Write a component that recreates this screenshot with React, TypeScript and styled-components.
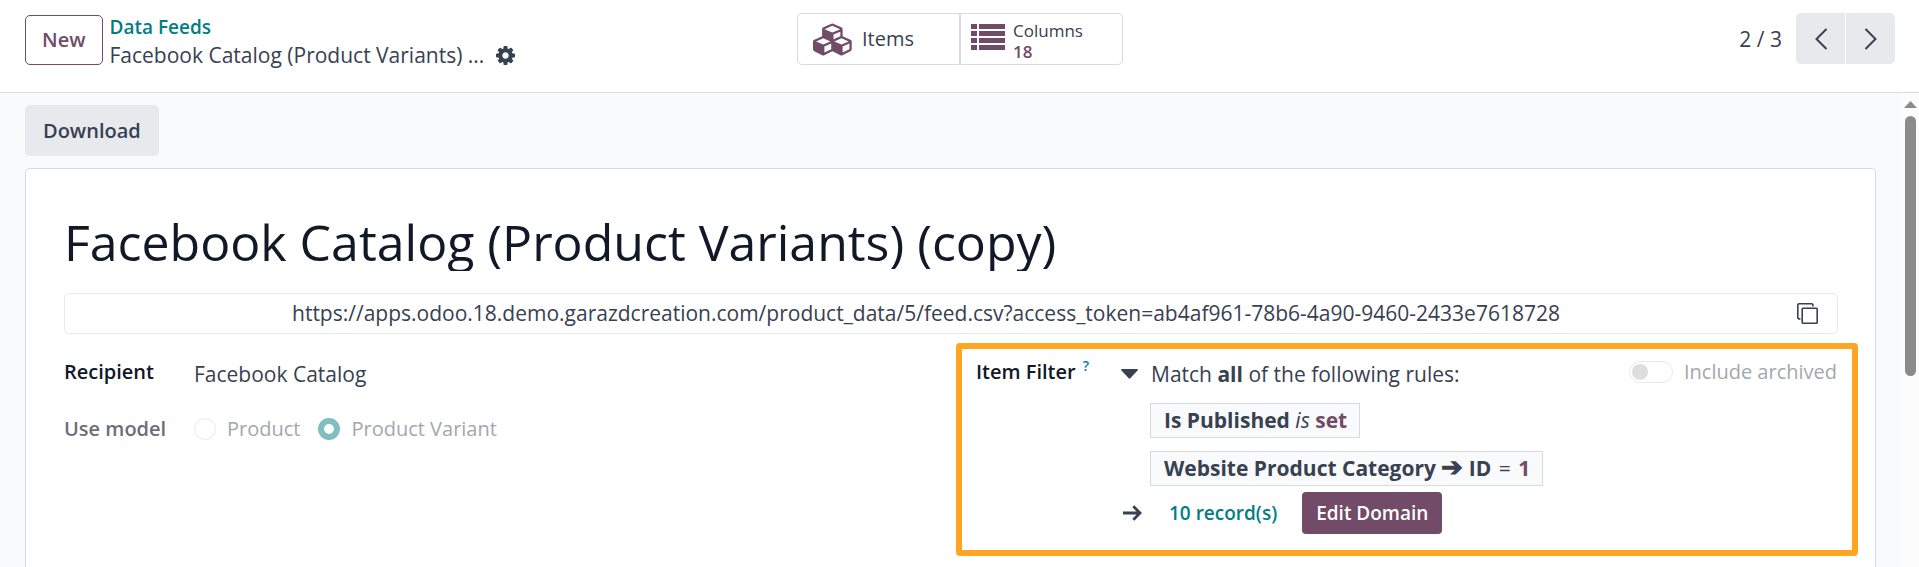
import React from 'react';
import styled, { createGlobalStyle } from 'styled-components';

const color = {
  text: '#374151',
  heading: '#111827',
  muted: '#a4a7ae',
  mutedLabel: '#6b6f79',
  brand: '#714b67',
  action: '#017e84',
  border: '#d8dadd',
  borderLight: '#e7e9ed',
  button: '#e7e9ed',
  view: '#f9fafb',
  highlight: '#ffa522',
};

const GlobalStyle = createGlobalStyle`
  *, *::before, *::after { box-sizing: border-box; }
  body {
    margin: 0;
    background: #fff;
    color: ${color.text};
    font: 400 21px/28px "Open Sans", "Noto Sans", sans-serif;
  }
  button, input { font: inherit; color: inherit; margin: 0; }
  button { padding: 0; border: 0; background: none; cursor: pointer; }
  svg { display: block; flex: none; }
`;

const Shell = styled.div`
  display: flex;
  flex-direction: column;
  min-height: 100vh;
`;

/* Control panel */

const ControlPanel = styled.header`
  display: grid;
  grid-template-columns: 1fr auto 1fr;
  align-items: start;
  min-height: 93px;
  padding: 13px 24px 0 25px;
  border-bottom: 1px solid ${color.border};
`;

const PanelStart = styled.div`
  display: flex;
  align-items: flex-start;
  gap: 7px;
`;

const NewButton = styled.button`
  height: 50px;
  margin-top: 2px;
  padding: 0 16px;
  border: 1px solid ${color.brand};
  border-radius: 5px;
  color: ${color.brand};
  font-size: 20px;
  font-weight: 600;
`;

const Breadcrumb = styled.nav`
  display: flex;
  flex-direction: column;
  white-space: nowrap;
`;

const BreadcrumbLink = styled.a`
  color: ${color.action};
  font-size: 19px;
  font-weight: 600;
  text-decoration: none;
`;

const BreadcrumbCurrent = styled.div`
  display: flex;
  align-items: center;
  gap: 12px;
`;

const StatButtons = styled.div`
  display: flex;
`;

const StatButton = styled.button<{ $top?: boolean }>`
  display: flex;
  align-items: ${(p) => (p.$top ? 'flex-start' : 'center')};
  gap: 8px;
  width: 163px;
  height: 52px;
  padding: ${(p) => (p.$top ? '6px 10px 0' : '0 15px')};
  border: 1px solid ${color.border};
  font-size: 20px;
  text-align: left;

  &:first-child { border-radius: 5px 0 0 5px; }
  &:last-child { border-radius: 0 5px 5px 0; }
`;

const StatText = styled.span`
  display: flex;
  flex-direction: column;
  font-size: 17px;
  line-height: 21px;
`;

const StatValue = styled.span`
  color: ${color.brand};
  font-weight: 600;
`;

const Pager = styled.div`
  display: flex;
  align-items: center;
  justify-self: end;
  gap: 14px;
`;

const PagerButtons = styled.div`
  display: flex;
  gap: 1px;
`;

const PagerButton = styled.button`
  display: flex;
  align-items: center;
  justify-content: center;
  width: 49px;
  height: 51px;
  background: ${color.button};

  &:first-child { border-radius: 5px 0 0 5px; }
  &:last-child { border-radius: 0 5px 5px 0; }
`;

/* Form view */

const View = styled.div`
  display: flex;
  flex: 1;
  background: ${color.view};
`;

const Content = styled.main`
  display: flex;
  flex: 1;
  flex-direction: column;
  align-items: flex-start;
  gap: 12px;
  min-width: 0;
  padding: 12px 25px 0;
`;

const DownloadButton = styled.button`
  height: 51px;
  padding: 0 18px;
  border-radius: 5px;
  background: ${color.button};
  font-size: 20px;
  font-weight: 600;
`;

const Sheet = styled.section`
  flex: 1;
  align-self: stretch;
  padding: 44px 37px 11px 38px;
  border: 1px solid ${color.border};
  border-bottom: 0;
  border-radius: 5px 5px 0 0;
  background: #fff;
`;

const Title = styled.h1`
  margin: 0 0 22px;
  overflow: hidden;
  color: ${color.heading};
  font-size: 50px;
  font-weight: 400;
  line-height: 58px;
  white-space: nowrap;
`;

const UrlField = styled.div`
  display: flex;
  height: 41px;
  border: 1px solid ${color.borderLight};
  border-radius: 5px;
`;

const UrlText = styled.span`
  flex: 1;
  line-height: 39px;
  text-align: center;
`;

const CopyButton = styled.button`
  display: flex;
  align-items: center;
  padding: 0 19px 0 10px;
`;

const Groups = styled.div`
  display: grid;
  grid-template-columns: 1fr 1fr;
  align-items: start;
  gap: 10px;
  margin-top: 9px;
`;

const FieldGrid = styled.div`
  display: grid;
  grid-template-columns: 130px 1fr;
  row-gap: 27px;
  padding-top: 15px;
`;

const Label = styled.div<{ $muted?: boolean }>`
  color: ${(p) => (p.$muted ? color.mutedLabel : color.heading)};
  font-size: 20px;
  font-weight: 600;
`;

const FieldValue = styled.div`
  padding-top: 2px;
`;

const RadioGroup = styled.div`
  display: flex;
  gap: 18px;
`;

const Option = styled.label`
  display: flex;
  align-items: center;
  gap: 11px;
  color: ${color.muted};
  font-size: 20px;
`;

const Radio = styled.input`
  appearance: none;
  width: 22px;
  height: 22px;
  border: 1px solid ${color.borderLight};
  border-radius: 50%;
  background: #fff;

  &:checked { border: 6px solid #80bec1; }
`;

/* Domain editor */

const FilterPanel = styled.section`
  display: grid;
  grid-template-columns: 145px 1fr;
  margin-right: -20px;
  padding: 9px 15px 16px 14px;
  border: 6px solid ${color.highlight};
  border-radius: 4px;
`;

const Help = styled.sup`
  margin-left: 7px;
  color: #0180a5;
  font-size: 14px;
  line-height: 1px;
`;

const Domain = styled.div`
  display: flex;
  flex-direction: column;
`;

const DomainHead = styled.div`
  display: flex;
  align-items: flex-start;
  justify-content: space-between;
`;

const MatchLine = styled.button`
  display: flex;
  align-items: center;
  gap: 13px;
  padding-top: 2px;
`;

const Toggle = styled.input`
  display: flex;
  align-items: center;
  appearance: none;
  width: 44px;
  height: 22px;
  padding: 0 2px;
  border: 1px solid ${color.borderLight};
  border-radius: 11px;

  &::before {
    content: '';
    width: 16px;
    height: 16px;
    border-radius: 50%;
    background: #dedede;
  }
`;

const Rules = styled.div`
  display: flex;
  flex-direction: column;
  align-items: flex-start;
  gap: 13px;
  padding: 15px 0 6px 29px;
`;

const Rule = styled.div`
  padding: 0 12px 0 13px;
  border: 1px solid ${color.border};
  background: ${color.view};
  line-height: 33px;
  white-space: nowrap;
`;

const PathArrow = styled.span`
  font-size: 26px;
  line-height: 1px;
`;

const Operator = styled.span`
  margin: 0 2px;
`;

const RuleValue = styled.b`
  color: ${color.brand};
`;

const DomainFooter = styled.div`
  display: flex;
  align-items: center;
  padding-left: 2px;
`;

const RecordsButton = styled.button`
  margin: 0 25px 0 27px;
  color: ${color.action};
  font-size: 19px;
  font-weight: 600;
`;

const EditButton = styled.button`
  height: 42px;
  padding: 0 14px;
  border-radius: 4px;
  background: ${color.brand};
  color: #fff;
  font-size: 19px;
  font-weight: 600;
`;

/* Scrollbar */

const ScrollTrack = styled.div`
  display: flex;
  flex-direction: column;
  align-items: center;
  gap: 8px;
  width: 18px;
  padding: 8px 1px 0 2px;
  background: #fcfcfc;
`;

const ScrollThumb = styled.div`
  width: 11px;
  height: 260px;
  border-radius: 6px;
  background: #8b8b8b;
`;

const GearIcon = () => (
  <svg width="19" height="19" viewBox="128 128 1536 1536" fill="currentColor">
    <path d="M1152 896q0-106-75-181t-181-75-181 75-75 181 75 181 181 75 181-75 75-181zm512-109v222q0 12-8 23t-20 13l-185 28q-19 54-39 91 35 50 107 138 10 12 10 25t-9 23q-27 37-99 108t-94 71q-12 0-26-9l-138-108q-44 23-91 38-16 136-29 186-7 28-36 28h-222q-14 0-24.500-8.500t-11.500-21.500l-28-184q-49-16-90-37l-141 107q-10 9-25 9-14 0-25-11-126-114-165-168-7-10-7-23 0-12 8-23 15-21 51-66.500t54-70.500q-27-50-41-99l-183-27q-13-2-21-12.500t-8-23.500v-222q0-12 8-23t19-13l186-28q14-46 39-92-40-57-107-138-10-12-10-24 0-10 9-23 26-36 98.500-107.500t94.500-71.500q13 0 26 10l138 107q44-23 91-38 16-136 29-186 7-28 36-28h222q14 0 24.500 8.500t11.500 21.500l28 184q49 16 90 37l142-107q9-9 24-9 13 0 25 10 129 119 165 170 7 8 7 22 0 12-8 23-15 21-51 66.500t-54 70.500q26 50 41 98l183 28q13 2 21 12.500t8 23.500z" />
  </svg>
);

const CubesIcon = () => (
  <svg width="41" height="33" viewBox="0 0 2304 1792" fill={color.brand}>
    <path d="M640 1632l384-192v-314l-384 164v342zm-64-454l404-173-404-173-404 173zm1088 454l384-192v-314l-384 164v342zm-64-454l404-173-404-173-404 173zm-448-293l384-165v-266l-384 164v267zm-64-379l441-189-441-189-441 189zm1088 518v416q0 36-19 67t-52 47l-448 224q-25 14-57 14t-57-14l-448-224q-5-2-7-4-2 2-7 4l-448 224q-25 14-57 14t-57-14l-448-224q-33-16-52-47t-19-67v-416q0-38 21.500-70t56.500-48l434-186v-400q0-38 21.500-70t56.500-48l448-192q23-10 50-10t50 10l448 192q35 16 56.500 48t21.500 70v400l434 186q36 16 57 48t21 70z" />
  </svg>
);

const ListIcon = styled(({ className }: { className?: string }) => (
  <svg className={className} width="34" height="26" viewBox="0 0 34 26" fill={color.brand}>
    {[0, 7, 14, 21].map((y) => (
      <React.Fragment key={y}>
        <rect x="0" y={y} width="6" height="5" />
        <rect x="8" y={y} width="26" height="5" />
      </React.Fragment>
    ))}
  </svg>
))`
  margin-top: 4px;
`;

const Chevron = ({ points }: { points: string }) => (
  <svg width="14" height="22" viewBox="0 0 14 22" fill="none" stroke="currentColor" strokeWidth="2">
    <polyline points={points} />
  </svg>
);

const CopyIcon = () => (
  <svg width="21" height="21" viewBox="0 0 21 21" fill="none" stroke="currentColor" strokeWidth="1.600">
    <path d="M3.400 15.900H2a1.200 1.200 0 0 1-1.200-1.200V2A1.200 1.200 0 0 1 2 .8h12.700A1.200 1.200 0 0 1 15.900 2v1.400" />
    <rect x="5.200" y="5.200" width="15" height="15" rx="0.800" />
  </svg>
);

const CaretIcon = () => (
  <svg width="17" height="10" viewBox="0 0 17 10" fill="currentColor">
    <path d="M.9 0h15.200c.8 0 1.100.8.6 1.300L9.300 9.300c-.5.5-1.100.5-1.600 0L.3 1.300C-.2.8.1 0 .9 0z" />
  </svg>
);

const ArrowIcon = () => (
  <svg width="19" height="16" viewBox="0 0 19 16" fill="none" stroke="currentColor" strokeWidth="2.800">
    <path d="M0 8h17M10.300 1.300L17 8l-6.700 6.700" />
  </svg>
);

const ScrollArrow = () => (
  <svg width="13" height="7" viewBox="0 0 13 7" fill="#8b8b8b">
    <path d="M6.500 0L13 7H0z" />
  </svg>
);

export default function App() {
  return (
    <Shell>
      <GlobalStyle />
      <ControlPanel>
        <PanelStart>
          <NewButton type="button">New</NewButton>
          <Breadcrumb aria-label="Breadcrumb">
            <BreadcrumbLink href="#">Data Feeds</BreadcrumbLink>
            <BreadcrumbCurrent>
              <span>Facebook Catalog (Product Variants) ...</span>
              <button type="button" aria-label="Actions">
                <GearIcon />
              </button>
            </BreadcrumbCurrent>
          </Breadcrumb>
        </PanelStart>
        <StatButtons>
          <StatButton type="button">
            <CubesIcon />
            <span>Items</span>
          </StatButton>
          <StatButton type="button" $top>
            <ListIcon />
            <StatText>
              <span>Columns</span>
              <StatValue>18</StatValue>
            </StatText>
          </StatButton>
        </StatButtons>
        <Pager>
          <span>2 / 3</span>
          <PagerButtons>
            <PagerButton type="button" aria-label="Previous">
              <Chevron points="12.500,1 2.500,11 12.500,21" />
            </PagerButton>
            <PagerButton type="button" aria-label="Next">
              <Chevron points="1.500,1 11.500,11 1.500,21" />
            </PagerButton>
          </PagerButtons>
        </Pager>
      </ControlPanel>

      <View>
        <Content>
          <DownloadButton type="button">Download</DownloadButton>
          <Sheet>
            <Title>Facebook Catalog (Product Variants) (copy)</Title>
            <UrlField>
              <UrlText>
                https://apps.odoo.18.demo.garazdcreation.com/product_data/5/feed.csv?access_token=ab4af961-78b6-4a90-9460-2433e7618728
              </UrlText>
              <CopyButton type="button" aria-label="Copy">
                <CopyIcon />
              </CopyButton>
            </UrlField>
            <Groups>
              <FieldGrid>
                <Label>Recipient</Label>
                <FieldValue>Facebook Catalog</FieldValue>
                <Label $muted id="use-model">
                  Use model
                </Label>
                <RadioGroup role="radiogroup" aria-labelledby="use-model">
                  <Option>
                    <Radio type="radio" name="model" disabled />
                    Product
                  </Option>
                  <Option>
                    <Radio type="radio" name="model" defaultChecked disabled />
                    Product Variant
                  </Option>
                </RadioGroup>
              </FieldGrid>
              <FilterPanel>
                <Label>
                  Item Filter<Help>?</Help>
                </Label>
                <Domain>
                  <DomainHead>
                    <MatchLine type="button">
                      <CaretIcon />
                      <span>
                        Match <b>all</b> of the following rules:
                      </span>
                    </MatchLine>
                    <Option>
                      <Toggle type="checkbox" role="switch" disabled />
                      Include archived
                    </Option>
                  </DomainHead>
                  <Rules>
                    <Rule>
                      <b>Is Published</b> <i>is</i> <RuleValue>set</RuleValue>
                    </Rule>
                    <Rule>
                      <b>
                        Website Product Category <PathArrow>➔</PathArrow> ID
                      </b>{' '}
                      <Operator>=</Operator> <RuleValue>1</RuleValue>
                    </Rule>
                  </Rules>
                  <DomainFooter>
                    <ArrowIcon />
                    <RecordsButton type="button">10 record(s)</RecordsButton>
                    <EditButton type="button">Edit Domain</EditButton>
                  </DomainFooter>
                </Domain>
              </FilterPanel>
            </Groups>
          </Sheet>
        </Content>
        <ScrollTrack aria-hidden="true">
          <ScrollArrow />
          <ScrollThumb />
        </ScrollTrack>
      </View>
    </Shell>
  );
}
